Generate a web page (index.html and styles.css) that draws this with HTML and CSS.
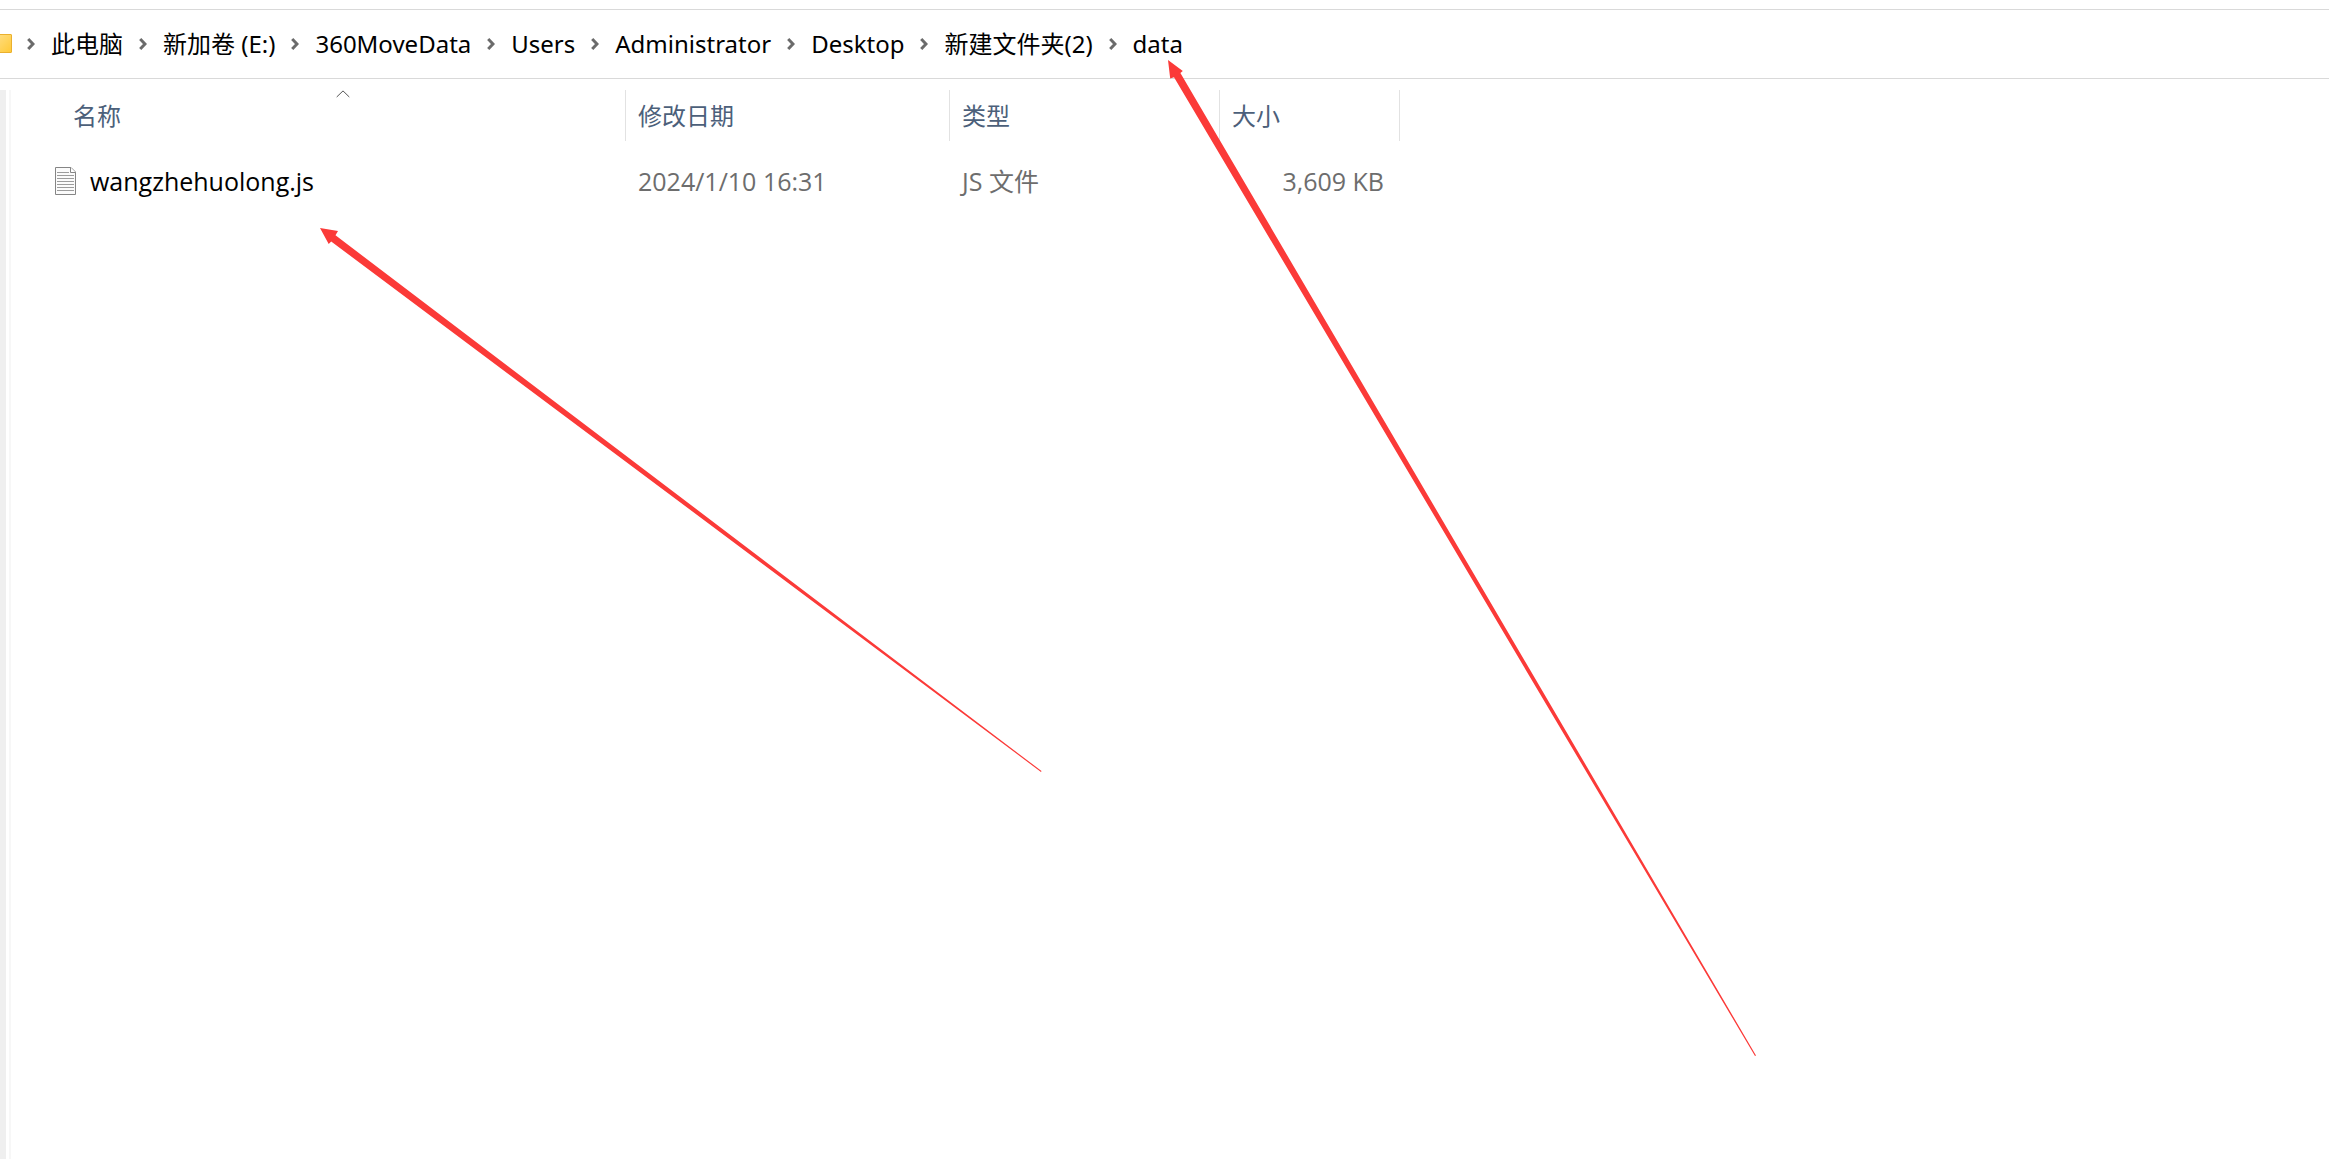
FILE: index.html
```html
<!DOCTYPE html>
<html lang="zh-CN">

<head>
    <meta charset="UTF-8">
    <meta name="viewport" content="width=device-width, initial-scale=1.0">
    <title>data</title>
    <link rel="stylesheet" href="styles.css">
</head>

<body>
    <nav class="address">
        <svg class="folder" width="12" height="20" viewBox="0 0 12 20">
            <defs>
                <linearGradient id="folder-fill" x1="0" y1="0" x2="1" y2="1">
                    <stop offset="0" stop-color="#ffe08a" />
                    <stop offset="1" stop-color="#ffc937" />
                </linearGradient>
            </defs>
            <rect x="-6" y="0.5" width="17.5" height="18" rx="0.5" fill="url(#folder-fill)" stroke="#eab02e" />
        </svg>
        <ol class="crumbs">
            <li><svg class="chevron" viewBox="0 0 8 14"><path d="M1.2 2 L6 7 L1.2 12" /></svg><a href="#">此电脑</a></li>
            <li><svg class="chevron" viewBox="0 0 8 14"><path d="M1.2 2 L6 7 L1.2 12" /></svg><a href="#">新加卷 (E:)</a></li>
            <li><svg class="chevron" viewBox="0 0 8 14"><path d="M1.2 2 L6 7 L1.2 12" /></svg><a href="#">360MoveData</a></li>
            <li><svg class="chevron" viewBox="0 0 8 14"><path d="M1.2 2 L6 7 L1.2 12" /></svg><a href="#">Users</a></li>
            <li><svg class="chevron" viewBox="0 0 8 14"><path d="M1.2 2 L6 7 L1.2 12" /></svg><a href="#">Administrator</a></li>
            <li><svg class="chevron" viewBox="0 0 8 14"><path d="M1.2 2 L6 7 L1.2 12" /></svg><a href="#">Desktop</a></li>
            <li><svg class="chevron" viewBox="0 0 8 14"><path d="M1.2 2 L6 7 L1.2 12" /></svg><a href="#">新建文件夹(2)</a></li>
            <li><svg class="chevron" viewBox="0 0 8 14"><path d="M1.2 2 L6 7 L1.2 12" /></svg><a href="#">data</a></li>
        </ol>
    </nav>

    <main class="content">
        <div class="splitter"></div>
        <table class="files">
            <colgroup>
                <col class="col-name">
                <col class="col-date">
                <col class="col-type">
                <col class="col-size">
            </colgroup>
            <thead>
                <tr>
                    <th class="sorted">
                        名称
                        <svg class="sort" width="14" height="8" viewBox="0 0 14 8"><path d="M0.7 7 L7 0.9 L13.3 7" /></svg>
                    </th>
                    <th>修改日期</th>
                    <th>类型</th>
                    <th>大小</th>
                </tr>
            </thead>
            <tbody>
                <tr>
                    <td>
                        <div class="file">
                            <svg width="22" height="28" viewBox="0 0 22 28">
                                <path d="M0.5 0.5 H16 L20.5 5 V27.5 H0.5 Z" fill="#fbfbfb" stroke="#858585" />
                                <path d="M15.5 0.5 V5.5 H20.5" fill="#fff" stroke="#858585" />
                                <path d="M2 5.5 H14 M2 8.5 H19 M2 11.5 H19 M2 14.5 H19 M2 17.5 H19 M2 20.5 H19 M2 23.5 H19" stroke="#9c9c9c" />
                            </svg>
                            <span>wangzhehuolong.js</span>
                        </div>
                    </td>
                    <td>2024/1/10 16:31</td>
                    <td>JS 文件</td>
                    <td class="size">3,609 KB</td>
                </tr>
            </tbody>
        </table>
    </main>

    <!-- pointers drawn over the window -->
    <svg class="arrows" width="1760" height="1060" viewBox="0 0 1760 1060">
        <path d="M320 228 L338 231 L335.5 235.3 L1041.5 771 L1041 772 L331.2 241.5 L328.7 244 Z" />
        <path d="M1168 60 L1182.8 71 L1180.4 73 L1756 1055.5 L1755 1056 L1174 77.3 L1170.2 78.5 Z" />
    </svg>
</body>

</html>
```

FILE: styles.css
```css
* {
    box-sizing: border-box;
}

body {
    margin: 0;
    padding-top: 9px;
    min-height: 100vh;
    display: flex;
    flex-direction: column;
    background-color: #fff;
    color: #000;
    font-family: "Noto Sans", "Noto Sans CJK SC", sans-serif;
    font-size: 24px;
    line-height: 32px;
}

.address {
    display: flex;
    align-items: center;
    height: 70px;
    border-top: 1px solid #d9d9d9;
    border-bottom: 1px solid #d9d9d9;
}

.crumbs {
    display: flex;
    gap: 16px;
    margin: 0;
    padding: 0 0 0 15px;
    list-style: none;
}

.crumbs li {
    display: flex;
    align-items: center;
    gap: 16px;
    white-space: nowrap;
}

.crumbs a {
    color: #000;
    text-decoration: none;
}

.chevron {
    width: 8px;
    height: 14px;
    fill: none;
    stroke: #6b6b6b;
    stroke-width: 3;
}

.content {
    flex: 1;
    display: flex;
    align-items: flex-start;
    margin-top: 11px;
}

.splitter {
    align-self: stretch;
    width: 11px;
    border-left: 6px solid #efefef;
    border-right: 2px solid #f7f7f7;
}

.files {
    table-layout: fixed;
    width: 1345px;
    margin-left: 44px;
    border-collapse: separate;
    border-spacing: 0;
}

.col-name {
    width: 571px;
}

.col-date {
    width: 324px;
}

.col-type {
    width: 270px;
}

.col-size {
    width: 180px;
}

.files th {
    height: 51px;
    padding: 0 0 0 12px;
    border-right: 1px solid #e2e2e2;
    color: #4c607a;
    font-weight: normal;
    text-align: left;
}

.files th.sorted {
    position: relative;
    padding-left: 18px;
}

.sort {
    position: absolute;
    top: 0;
    left: 50%;
    margin-left: -4px;
    fill: none;
    stroke: #555;
}

.files td {
    height: 80px;
    padding: 0 0 0 12px;
    color: #6d6d6d;
    font-family: "Open Sans", "Noto Sans CJK SC", sans-serif;
    font-size: 25px;
}

.files td:first-child {
    padding-left: 0;
    color: #000;
}

.files td.size {
    padding-right: 16px;
    text-align: right;
}

.file {
    display: flex;
    align-items: center;
    gap: 13px;
}

.arrows {
    position: absolute;
    top: 0;
    left: 0;
    fill: #fb3a38;
    pointer-events: none;
}
```
